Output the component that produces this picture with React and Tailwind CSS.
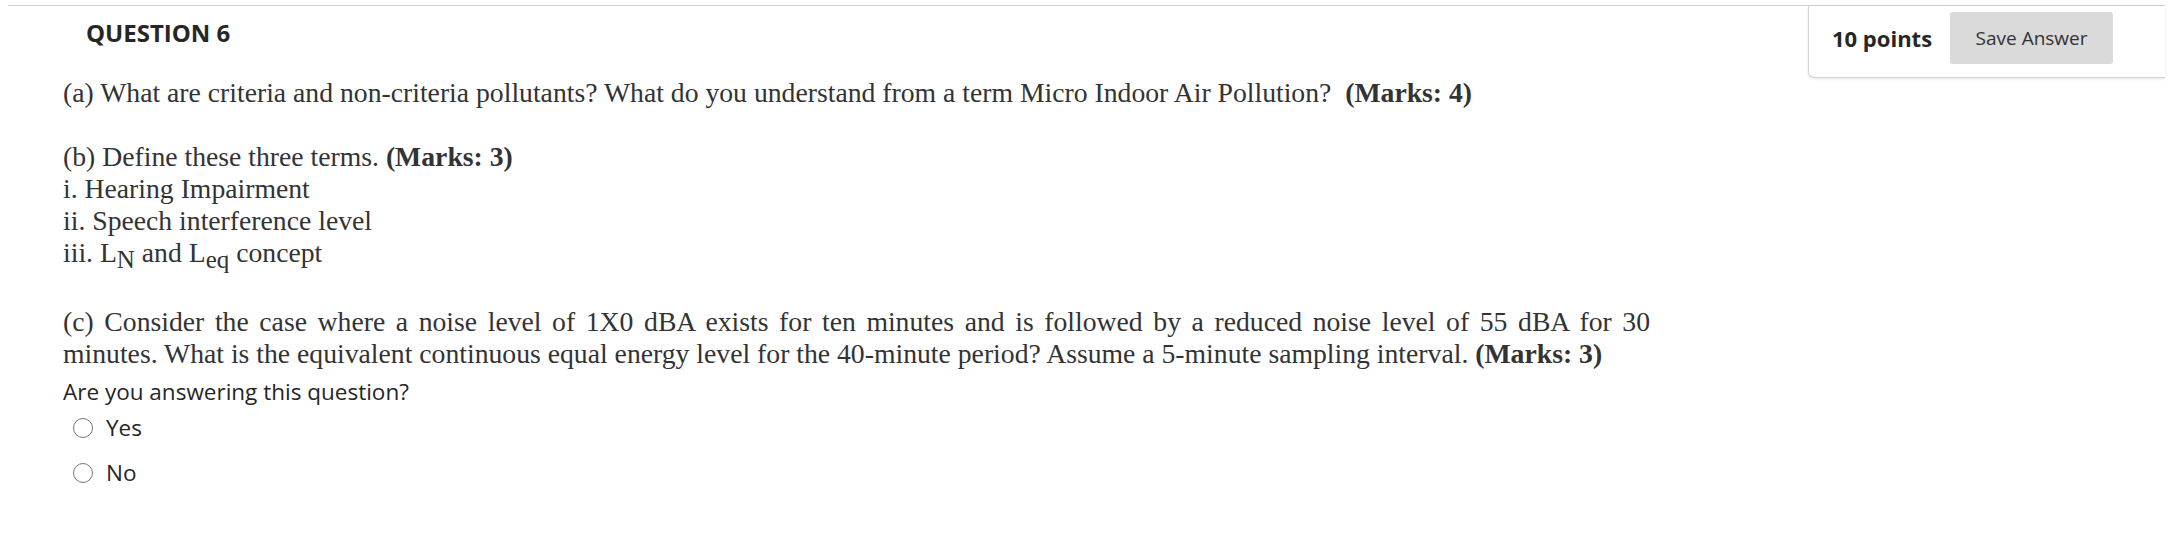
export default function App() {
  return (
    <div className="min-h-screen bg-white pt-[5px] pl-[8px] pr-[18px]">
      <div className="flex border-t border-[#d3d3d3]">
        <div className="flex-1">
          <h2 className="pt-[11px] pl-[78px] font-['Open_Sans',sans-serif] text-[24px] leading-[32px] font-bold text-[#262626]">
            QUESTION 6
          </h2>
          <div className="pl-[55px] pt-[28px] w-[1642px]">
            <Question />
            <Answer />
          </div>
        </div>
        <div className="self-start flex items-center gap-[18px] w-[357px] shrink-0 pt-[6px] pb-[13px] pl-[23px] pr-[52px] border-l border-b border-[#d4d4d4] rounded-bl-md shadow-[0_1px_3px_rgba(0,0,0,0.1)]">
          <span className="font-['Open_Sans',sans-serif] text-[22px] font-bold text-[#262626] whitespace-nowrap">
            10 points
          </span>
          <button className="h-[52px] w-[165px] rounded-[3px] bg-[#dadada] font-['Open_Sans',sans-serif] text-[19px] text-[#333]">
            Save Answer
          </button>
        </div>
      </div>
    </div>
  )
}

function Question() {
  return (
    <div className="font-['Liberation_Serif','Times_New_Roman',serif] text-[27.7px] leading-[32px] text-[#333]">
      <p>
        (a) What are criteria and non-criteria pollutants? What do you understand from a term Micro Indoor Air
        Pollution?&nbsp; <b>(Marks: 4)</b>
      </p>
      <p className="mt-[32px]">
        (b) Define these three terms. <b>(Marks: 3)</b>
        <br />
        i. Hearing Impairment
        <br />
        ii. Speech interference level
        <br />
        iii. L<sub className="text-[25px] -bottom-[6px]">N</sub> and L
        <sub className="text-[25px] -bottom-[6px]">eq</sub> concept
      </p>
      <p className="mt-[37px] text-justify">
        (c) Consider the case where a noise level of 1X0 dBA exists for ten minutes and is followed by a reduced
        noise level of 55 dBA for 30 minutes. What is the equivalent continuous equal energy level for the
        40-minute period? Assume a 5-minute sampling interval. <b>(Marks: 3)</b>
      </p>
    </div>
  )
}

function Answer() {
  const options = ['Yes', 'No']
  return (
    <div className="mt-[8px] font-['Open_Sans',sans-serif] text-[22.5px] leading-[28px] text-[#262626]">
      <p>Are you answering this question?</p>
      <div className="-mt-[1px]">
        {options.map((o) => (
          <label key={o} className="flex items-center h-[45px] pl-[10px] gap-[13px]">
            <span className="w-[20px] h-[20px] rounded-full border-[1.5px] border-[#767676] bg-white" />
            <span>{o}</span>
          </label>
        ))}
      </div>
    </div>
  )
}
